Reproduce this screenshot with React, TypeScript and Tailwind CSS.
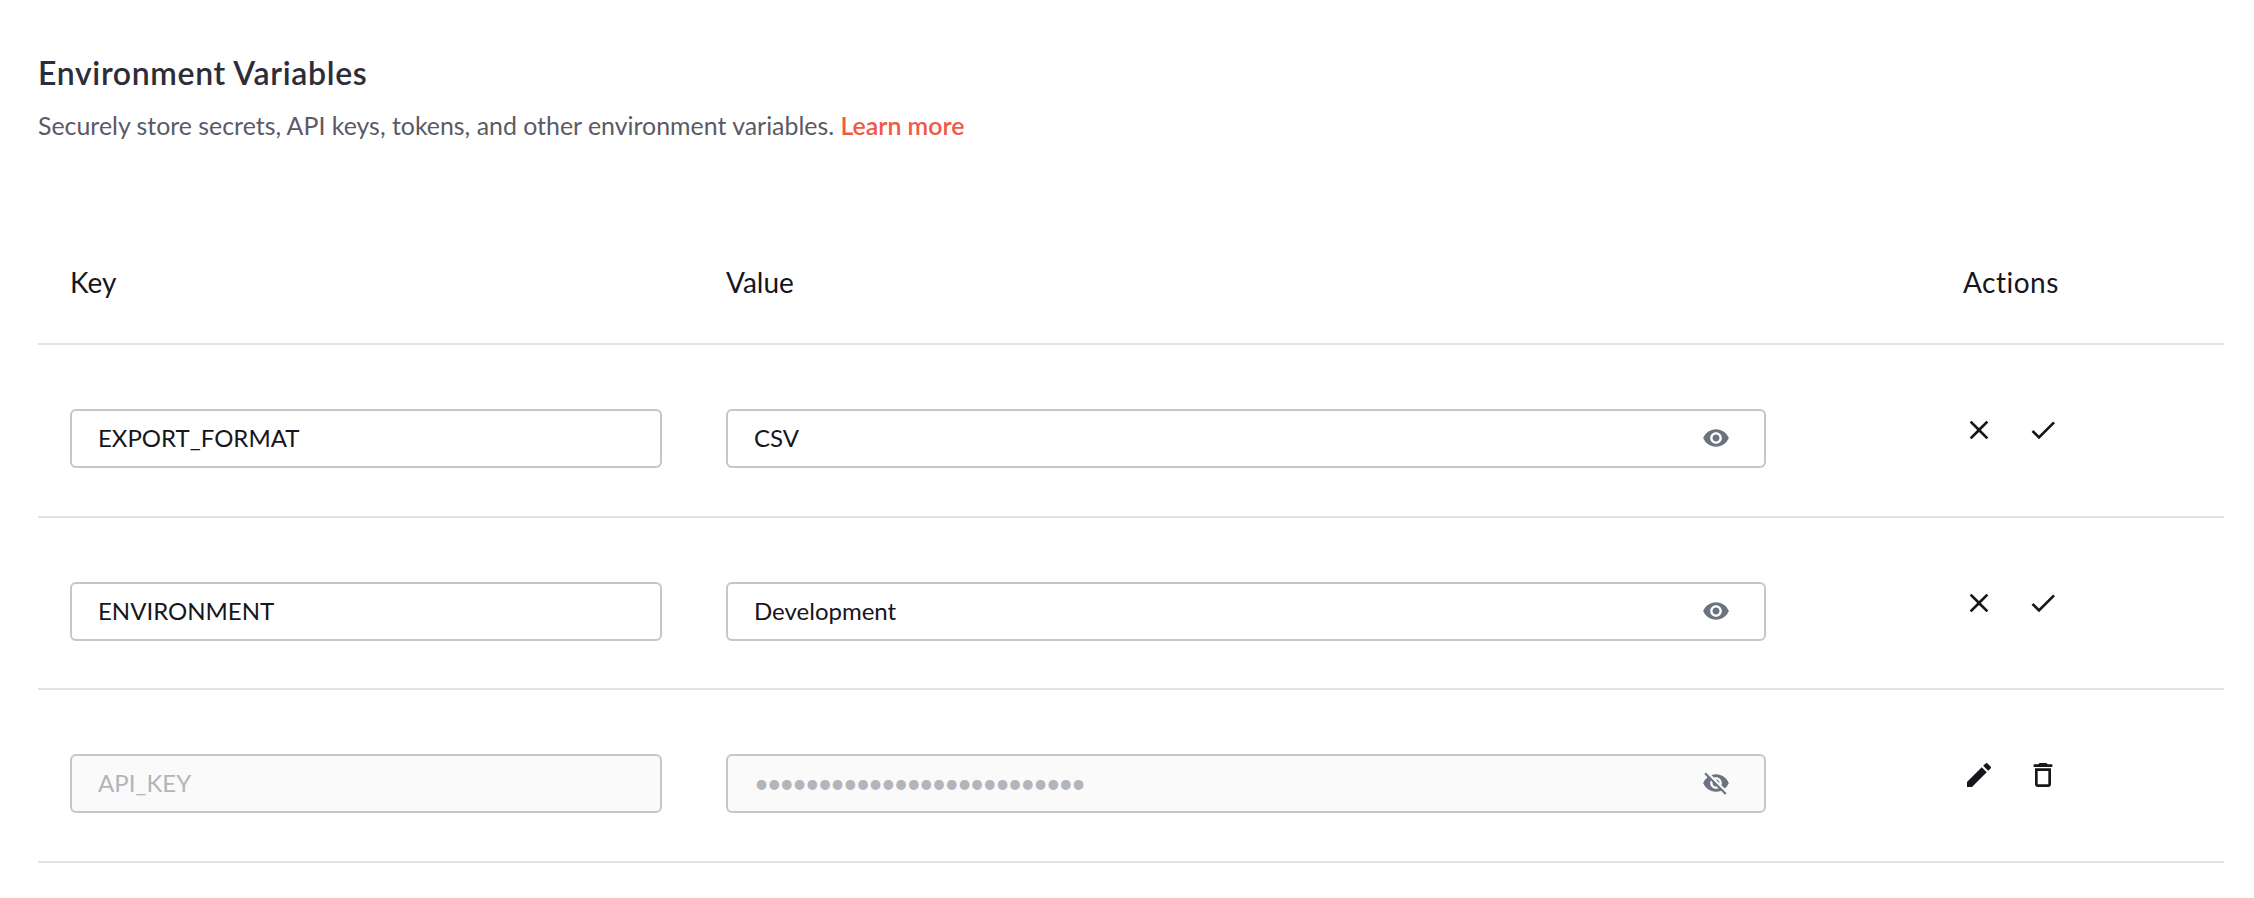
import { MdCheck, MdClose, MdDeleteOutline, MdEdit, MdVisibility, MdVisibilityOff } from 'react-icons/md';

interface EnvRow {
  name: string;
  value: string;
  locked?: boolean;
}

const rows: EnvRow[] = [
  { name: 'EXPORT_FORMAT', value: 'CSV' },
  { name: 'ENVIRONMENT', value: 'Development' },
  { name: 'API_KEY', value: '•'.repeat(26), locked: true },
];

function Row({ row }: { row: EnvRow }) {
  const box = row.locked ? 'bg-[#fafafa] text-[#b4b4bc]' : 'bg-white text-[#16161c]';

  return (
    <div className="flex h-[172.5px] border-b-2 border-[#e2e2e2]">
      <div className="w-[656px] shrink-0 pl-8 pt-16">
        <div className={`flex h-[59px] w-[592px] items-center rounded-[6px] border-2 border-[#c6c6ca] pb-[1px] px-[26px] text-[24px] ${box}`}>
          {row.name}
        </div>
      </div>
      <div className="w-[1238px] shrink-0 pl-8 pt-16">
        <div className={`flex h-[59px] w-[1040px] items-center justify-between rounded-[6px] border-2 border-[#c6c6ca] pb-[1px] pl-[26px] pr-[34px] text-[24px] ${box}`}>
          <span className={row.locked ? 'text-[26px] tracking-[-2.4px]' : ''}>{row.value}</span>
          {row.locked ? (
            <MdVisibilityOff className="text-[28px] text-[#6b7280]" />
          ) : (
            <MdVisibility className="text-[28px] text-[#6b7280]" />
          )}
        </div>
      </div>
      <div className="flex gap-8 pl-[31px] pt-[69px] text-[32px] text-[#16161c]">
        {row.locked ? (
          <>
            <MdEdit />
            <MdDeleteOutline />
          </>
        ) : (
          <>
            <MdClose />
            <MdCheck />
          </>
        )}
      </div>
    </div>
  );
}

export default function App() {
  return (
    <div className="h-[898px] overflow-hidden bg-white pl-[38px] pr-[30px] pt-[54px] font-['Lato',sans-serif]">
      <h1 className="text-[32px] leading-[38px] font-semibold tracking-[0.65px] text-[#2d2d3a]">Environment Variables</h1>
      <p className="mt-[17px] text-[24.9px] leading-[32px] text-[#5a5a66]">
        Securely store secrets, API keys, tokens, and other environment variables.{' '}
        <a className="font-semibold text-[#ef5a45]">Learn more</a>
      </p>

      {/* Table */}
      <div className="mt-[83px]">
        <div className="flex h-[121px] items-center border-b-2 border-[#e2e2e2] pb-[3px] text-[28px] text-[#16161c]">
          <div className="w-[656px] shrink-0 pl-8">Key</div>
          <div className="w-[1238px] shrink-0 pl-8">Value</div>
          <div className="pl-[31px] tracking-[0.5px]">Actions</div>
        </div>
        {rows.map((row) => (
          <Row key={row.name} row={row} />
        ))}
      </div>
    </div>
  );
}
